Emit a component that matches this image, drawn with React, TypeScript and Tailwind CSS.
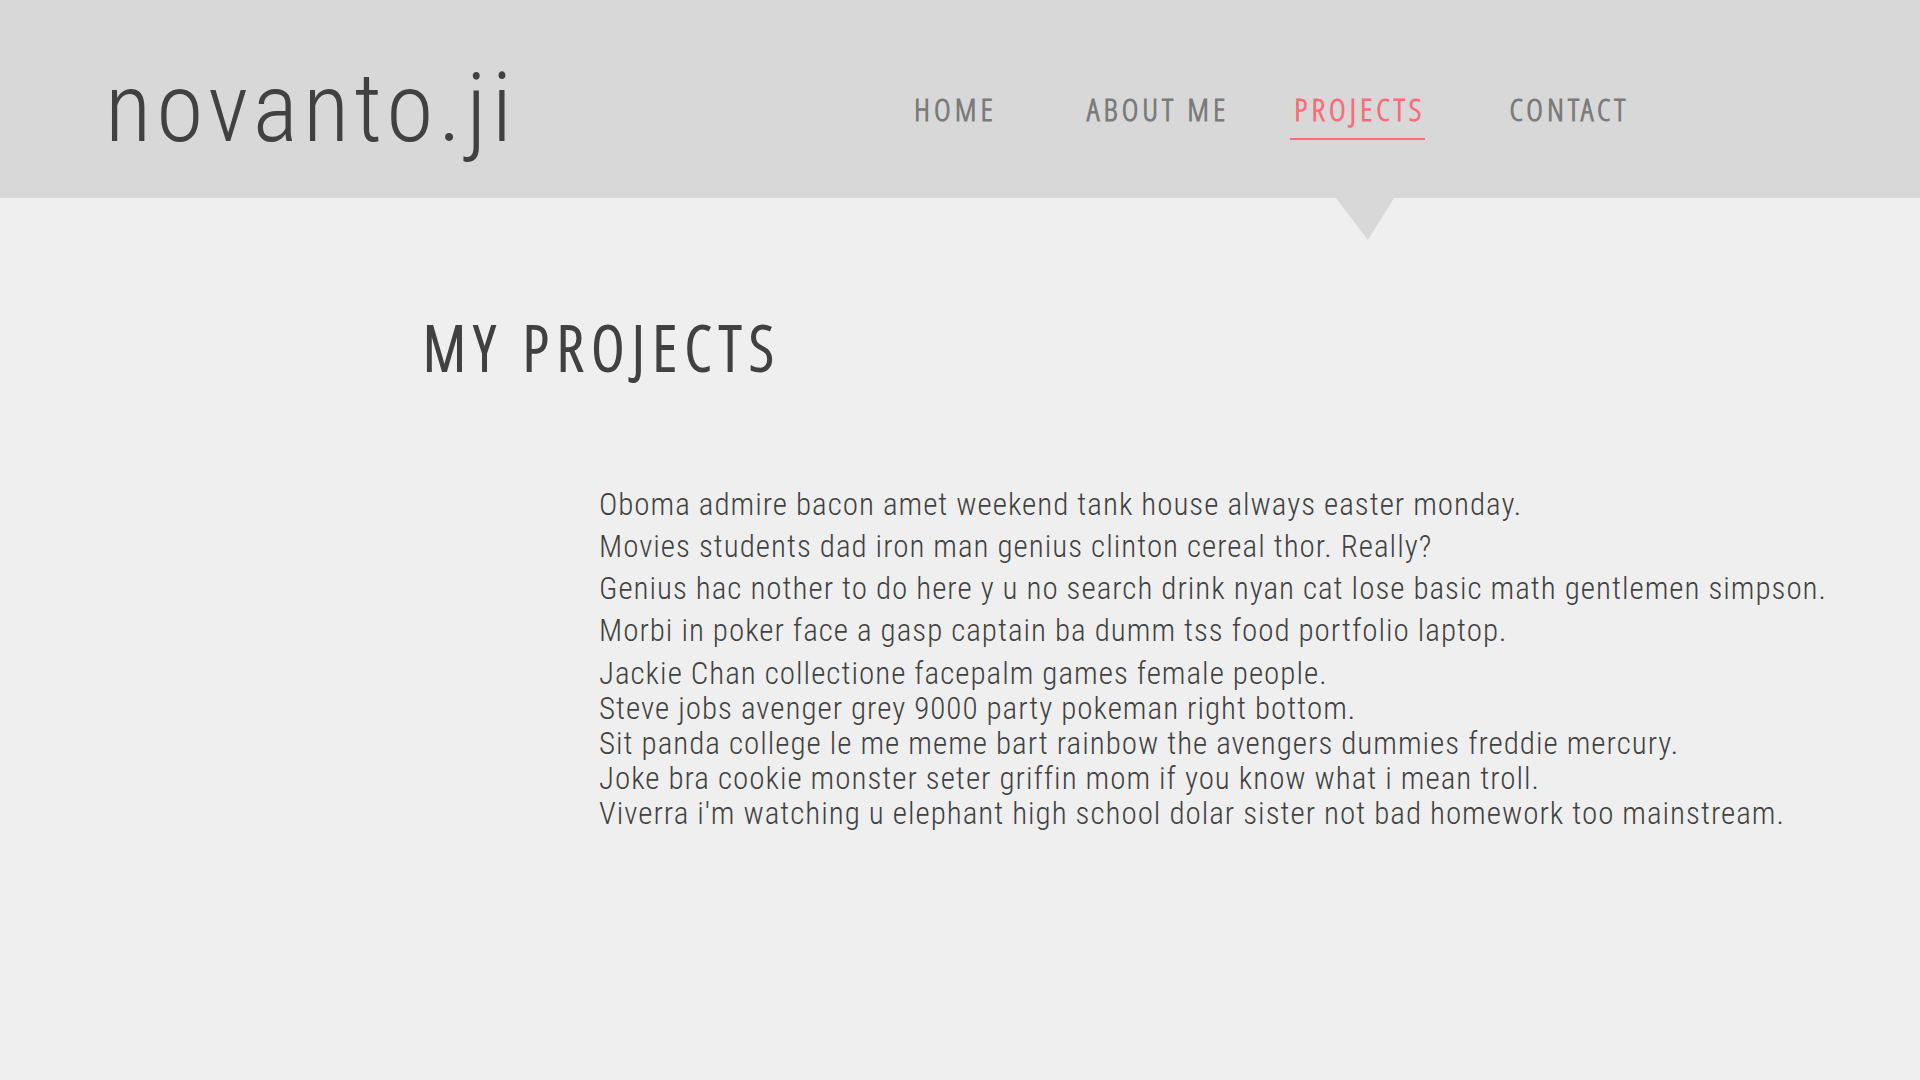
const links = [
  { label: "HOME", place: "", active: false },
  { label: "ABOUT ME", place: "ml-[90px]", active: false },
  { label: "PROJECTS", place: "ml-[61px]", active: true },
  { label: "CONTACT", place: "ml-[84px]", active: false },
];

const spaced = [
  "Oboma admire bacon amet weekend tank house always easter monday.",
  "Movies students dad iron man genius clinton cereal thor. Really?",
  "Genius hac nother to do here y u no search drink nyan cat lose basic math gentlemen simpson.",
  "Morbi in poker face a gasp captain ba dumm tss food portfolio laptop.",
];

const compact = [
  "Jackie Chan collectione facepalm games female people.",
  "Steve jobs avenger grey 9000 party pokeman right bottom.",
  "Sit panda college le me meme bart rainbow the avengers dummies freddie mercury.",
  "Joke bra cookie monster seter griffin mom if you know what i mean troll.",
  "Viverra i'm watching u elephant high school dolar sister not bad homework too mainstream.",
];

function NavLink({ label, active, place }: { label: string; active: boolean; place: string }) {
  return (
    <li className={`relative ${place}`}>
      <a
        href="#"
        aria-current={active ? "page" : undefined}
        className={`block border-b-2 pb-[7px] text-[32px] leading-[44px] tracking-[4px] ${
          active ? "border-[#fb6b78] pl-1 text-[#fb6b78]" : "border-transparent text-[#7b7b7b]"
        }`}
      >
        {label}
      </a>
      {active && (
        <svg aria-hidden="true" viewBox="0 0 58 42" className="absolute left-[46px] top-[111px] h-[42px] w-[58px]">
          <path d="M0 0H58L32 42Z" fill="#d8d8d8" />
        </svg>
      )}
    </li>
  );
}

export default function App() {
  return (
    <div className="min-h-screen bg-[#efefef] font-['Roboto_Condensed','Roboto',sans-serif] text-[#414142]">
      <header className="flex h-[198px] bg-[#d8d8d8] pl-[105px]">
        <a href="#" className="w-[809px] shrink-0 pt-[52px] text-[96px] font-light leading-[112px] tracking-[5px]">
          novanto.ji
        </a>
        <nav aria-label="Main" className="pt-[87px]">
          <ul className="flex whitespace-nowrap font-['Open_Sans_Condensed_Light','Open_Sans',sans-serif] font-semibold">
            {links.map((link) => (
              <NavLink key={link.label} {...link} />
            ))}
          </ul>
        </nav>
      </header>
      <main className="pt-[109px]">
        <h1 className="pl-[423px] font-['Open_Sans_Condensed_Light','Open_Sans',sans-serif] text-[63px] font-semibold leading-[80px] tracking-[8px]">
          MY PROJECTS
        </h1>
        <div className="pl-[599px] pt-[97px] text-[31px] font-light tracking-[1px]">
          {spaced.map((line) => (
            <p key={line} className="leading-[42px]">{line}</p>
          ))}
          <div className="pt-1">
            {compact.map((line) => (
              <p key={line} className="leading-[35px]">{line}</p>
            ))}
          </div>
        </div>
      </main>
    </div>
  );
}
